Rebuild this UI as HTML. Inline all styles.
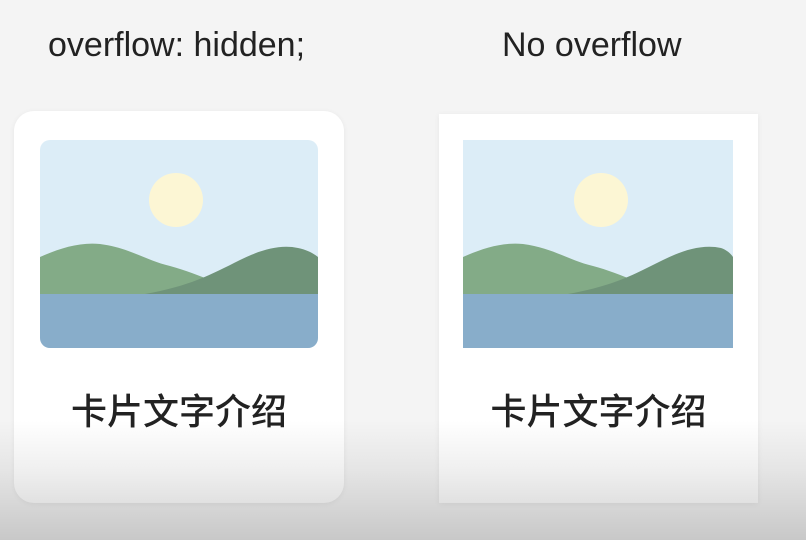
<!DOCTYPE html>
<html><head><meta charset="utf-8"><style>
html,body{margin:0;padding:0}
body{width:806px;height:540px;background:#f4f4f4;position:relative;overflow:hidden;font-family:"Liberation Sans","Noto Sans CJK SC",sans-serif;color:#222}
.t{position:absolute;top:25px;font-size:34px;white-space:nowrap;line-height:40px}
.card{position:absolute;background:#fff;box-shadow:0 1px 6px rgba(0,0,0,0.06)}
.img{position:absolute;top:140px;height:208px}
.cap{position:absolute;top:384px;font-size:36px;font-weight:500;line-height:50px;text-align:center;white-space:nowrap;font-family:"Noto Sans CJK SC",sans-serif}
.fade{position:absolute;left:0;top:420px;width:806px;height:120px;background:linear-gradient(rgba(0,0,0,0),rgba(0,0,0,0.06) 40%,rgba(0,0,0,0.18))}
</style></head><body>
<div class="t" style="left:48px">overflow: hidden;</div>
<div class="t" style="left:502px">No overflow</div>

<div class="card" style="left:14px;top:111px;width:330px;height:392px;border-radius:20px"></div>
<div class="card" style="left:439px;top:114px;width:319px;height:389px"></div>

<svg class="img" style="left:40px" width="278" height="208" viewBox="0 0 278 208">
<defs><clipPath id="c1"><rect width="278" height="208" rx="10"/></clipPath></defs>
<g clip-path="url(#c1)">
<rect width="278" height="208" fill="#dcedf7"/>
<circle cx="136" cy="60" r="27" fill="#fcf6d4"/>
<path d="M0 117 C20 108 40 102 60 104 C90 108 105 120 130 126 C145 130 160 136 175 142 L175 160 L0 160Z" fill="#83ab87"/>
<path d="M105 154 C150 146 170 135 200 120 C220 110 240 104 258 108 C268 110 274 114 278 117 L278 160 L105 160Z" fill="#6f9379"/>
<rect y="154" width="278" height="54" fill="#88adca"/>
</g></svg>

<svg class="img" style="left:463px" width="270" height="208" viewBox="0 0 270 208">
<rect width="278" height="208" fill="#dcedf7"/>
<circle cx="138" cy="60" r="27" fill="#fcf6d4"/>
<path d="M0 117 C20 108 40 102 60 104 C90 108 105 120 130 126 C145 130 160 136 175 142 L175 160 L0 160Z" fill="#83ab87"/>
<path d="M105 154 C150 146 170 135 200 120 C220 110 240 104 258 108 C264 110 268 114 270 117 L270 160 L105 160Z" fill="#6f9379"/>
<rect y="154" width="278" height="54" fill="#88adca"/>
</svg>

<div class="cap" style="left:14px;width:330px">卡片文字介绍</div>
<div class="cap" style="left:439px;width:319px">卡片文字介绍</div>

<div class="fade"></div>
</body></html>
